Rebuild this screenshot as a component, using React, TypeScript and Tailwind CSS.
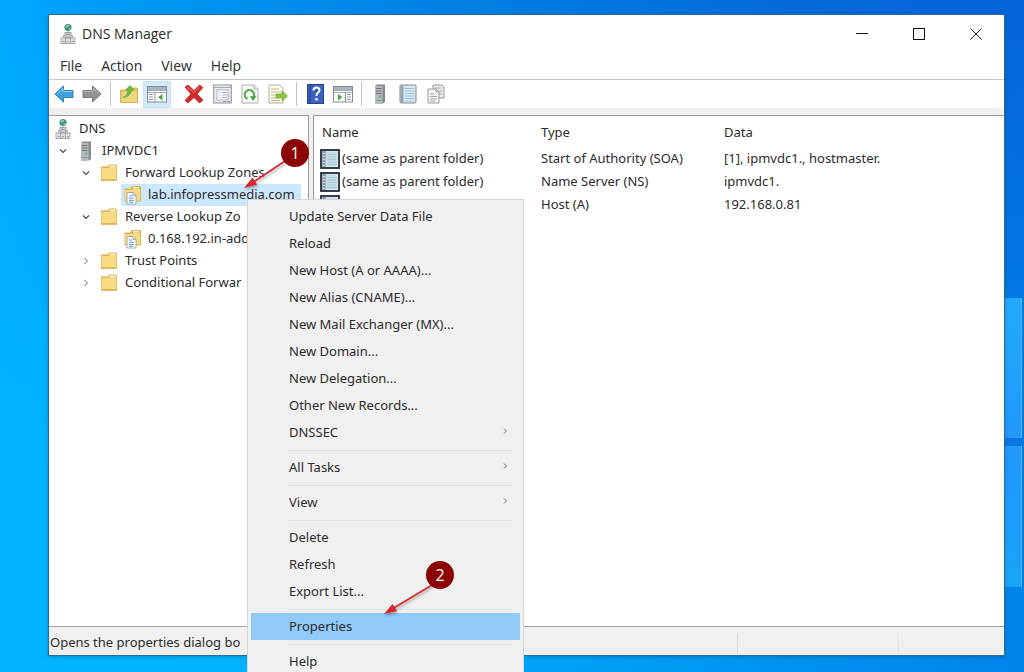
import type { ReactNode } from 'react';

function DnsIcon() {
  return (
    <svg width="16" height="22" viewBox="0 0 16 22" aria-hidden="true">
      <circle cx="8" cy="4.5" r="3.6" fill="#3c8f86" />
      <path d="M5 3.5q2-2.4 4.4-1.6L8.400 4 6 4.800zM8.600 5.400l2.400-.6-.6 2-1.600.6z" fill="#8fd08a" />
      <path d="M8 8.300v3M3.500 14.500v-2h9v2" stroke="#9a9fa2" fill="none" />
      <rect x="5" y="9.500" width="6" height="5" fill="#c5c9cb" stroke="#969b9f" strokeWidth=".8" />
      <rect x="1" y="15" width="14" height="5.500" fill="#dddfe1" stroke="#969b9f" strokeWidth=".8" />
      <path d="M5.500 15v5.500M10.500 15v5.500M2.500 18.500h2M7 18.500h2M12 18.500h2M6.500 11.500h3" stroke="#8b9094" strokeWidth=".8" />
    </svg>
  );
}

function ServerIcon() {
  return (
    <svg width="12" height="20" viewBox="0 0 12 20" aria-hidden="true">
      <path d="M1 2l2-1.500h8V18l-2 1.500H1z" fill="#868b8f" />
      <rect x="1" y="2" width="7.500" height="17.500" fill="#b5babd" />
      <path d="M2 4.500h5.500M2 7h5.500M2 9.500h5.500" stroke="#6c7275" />
      <rect x="5.200" y="11.500" width="2" height="2" fill="#5fae6b" />
      <path d="M2 16.500h5.500" stroke="#8d9396" />
    </svg>
  );
}

function FolderIcon() {
  return (
    <svg width="18" height="18" viewBox="0 0 18 18" aria-hidden="true">
      <path d="M1 2.500h6.500l1.500-2h7l1 1.500v14.500H1z" fill="#dfb551" />
      <path d="M9.500 1.500h6v2h-6z" fill="#fff6d8" />
      <path d="M1.500 4h8l1-1h6v12.500h-15z" fill="#f8da83" />
      <path d="M1 16h16" stroke="#cfa23f" />
      <path d="M16.500 3.500V16" stroke="#e2bd59" />
    </svg>
  );
}

function ZoneIcon() {
  return (
    <svg width="19" height="20" viewBox="0 0 19 20" aria-hidden="true">
      <path d="M1.500 3.500h6l1-2.500h8.500l1 1.500v14H1.500z" fill="#dcb450" />
      <path d="M2 5h7.500l1-1h6.500v11.500H2z" fill="#f7da86" />
      <path d="M10 2h6v1.500h-6z" fill="#fff6d8" />
      <path d="M4 7.500h6l3 3v8.500H4z" fill="#fff" stroke="#8d98a3" strokeWidth=".8" />
      <path d="M10 7.500v3h3" fill="#dbe7f1" stroke="#8d98a3" strokeWidth=".8" />
      <path d="M6 11h3M6 13.200h5M6 15.400h5M6 17.200h4" stroke="#4f8fcb" strokeWidth=".9" />
    </svg>
  );
}

function RecordIcon() {
  return (
    <svg width="20" height="20" viewBox="0 0 20 20" aria-hidden="true">
      <rect x="1" y="1" width="18" height="18" fill="#e9edf0" stroke="#252a38" strokeWidth="1.800" />
      <rect x="6" y="2.500" width="11.500" height="15" fill="#c6dfec" />
      <path d="M7.500 5.500h9M7.500 8h9M7.500 10.500h9M7.500 13h9M7.500 15.500h9" stroke="#9dbfd2" strokeWidth=".8" />
      <rect x="2.300" y="2" width="3.400" height="16" fill="#8b98a5" />
      <path d="M3 4.500h2M3 7.500h2M3 10.500h2M3 13.500h2M3 16.500h2" stroke="#dfe6ea" strokeWidth=".9" />
    </svg>
  );
}

function Arrow({ left }: { left?: boolean }) {
  return (
    <svg width="20" height="18" viewBox="0 0 20 18" aria-hidden="true">
      {left ? (
        <path d="M1 9l8.500-8v4.500H19v7H9.500V17z" fill="#3fa2e3" stroke="#2b7fbd" strokeLinejoin="round" />
      ) : (
        <path d="M19 9l-8.500-8v4.500H1v7h9.500V17z" fill="#929292" stroke="#7b7b7b" strokeLinejoin="round" />
      )}
      {left ? <path d="M3.500 8.500L9 3.500v3h9" stroke="#8fd0f7" fill="none" /> : <path d="M2 6.500h9.500v-3l5 5" stroke="#b9b9b9" fill="none" />}
    </svg>
  );
}

function UpFolderIcon() {
  return (
    <svg width="20" height="20" viewBox="0 0 20 20" aria-hidden="true">
      <path d="M1.500 6h6l2-2h9v14.500h-17z" fill="#e9c765" stroke="#c8a244" strokeWidth=".8" />
      <path d="M2.500 8h15.500v10H2.500z" fill="#f0d67f" />
      <path d="M4 13.500q4.500-1.500 5-7.500H6.500L11 1.500 15 6h-2.500q-1 7-8.500 7.500z" fill="#6bbf43" stroke="#4c9a30" strokeWidth=".6" />
    </svg>
  );
}

function PaneIcon({ flip }: { flip?: boolean }) {
  return (
    <svg width="20" height="18" viewBox="0 0 20 18" aria-hidden="true">
      <rect x=".5" y="1.500" width="19" height="15.500" fill="#fbfcfd" stroke="#838b93" />
      <rect x="1" y="2" width="18" height="3" fill="#a9b4be" />
      <path d="M1 5.500h18M1 7.500h18" stroke="#8e979f" strokeWidth=".8" />
      <path d={flip ? 'M12.500 7.500V17' : 'M8 7.500V17'} stroke="#8e979f" />
      <path d={flip ? 'M14 9.500h4M14 12h4M14 14.500h4' : 'M2 9.500h4M2 12h4M2 14.500h4'} stroke="#8a98a8" />
      <path d={flip ? 'M5 9l4.500 3.200L5 15.400z' : 'M15.500 9L11 12.200l4.500 3.200z'} fill="#4fa83c" />
    </svg>
  );
}

function DeleteIcon() {
  return (
    <svg width="20" height="20" viewBox="0 0 20 20" aria-hidden="true">
      <path d="M1 3l3-2 6 5.500L15.500 1 19 3.500 13 10l6 6-3.500 3L10 13.500 4 19l-3-2.500L7 10z" fill="#d22b2b" stroke="#a81d1d" strokeWidth=".7" />
      <path d="M3 3l7 5.500L15.500 3" stroke="#ee7d78" fill="none" />
    </svg>
  );
}

function PropertiesIcon() {
  return (
    <svg width="19" height="20" viewBox="0 0 19 20" aria-hidden="true">
      <rect x=".7" y="1" width="17.600" height="18" fill="#e8eaeb" stroke="#8b9297" />
      <path d="M1 3.500h17" stroke="#a3abb0" />
      <rect x="4" y="6" width="11" height="10" fill="#fff" stroke="#9aa2a8" strokeWidth=".8" />
      <path d="M6 8.500h1.500M9 8.500h5M6 11h1.500M9 11h5M6 13.500h1.500M9 13.500h5" stroke="#9fb3c5" />
      <path d="M10 17.500h3M14 17.500h3" stroke="#9ba3a8" />
    </svg>
  );
}

function RefreshIcon() {
  return (
    <svg width="18" height="20" viewBox="0 0 18 20" aria-hidden="true">
      <path d="M1 1h12l4 4v14H1z" fill="#fbfbf9" stroke="#a9afa8" />
      <path d="M13 1v4h4" fill="#dfe3df" stroke="#a9afa8" strokeWidth=".8" />
      <path d="M6.500 15A4.700 4.700 0 1 1 12.500 13" fill="none" stroke="#55b04f" strokeWidth="2.200" />
      <path d="M9 12.300h6.500L12 17z" fill="#47a545" />
    </svg>
  );
}

function ExportIcon() {
  return (
    <svg width="20" height="20" viewBox="0 0 20 20" aria-hidden="true">
      <path d="M1 1h11l3 3v15H1z" fill="#fdfcf3" stroke="#b1af9d" />
      <path d="M3 5h8M3 8h10M3 11h7M3 14h7M3 16.500h9" stroke="#c0b97c" />
      <path d="M8 10h6V7l5.500 5-5.500 5v-3H8z" fill="#8cc63f" stroke="#6da636" strokeWidth=".7" />
    </svg>
  );
}

function HelpIcon() {
  return (
    <svg width="17" height="20" viewBox="0 0 17 20" aria-hidden="true">
      <rect x=".5" y=".5" width="16" height="19" fill="#3d62bd" stroke="#24438f" />
      <path d="M3 1v18" stroke="#2747a0" strokeWidth="1.500" />
      <path d="M6.500 6.500q0-3 3-3t3 2.700q0 1.600-1.600 2.600T9.500 12" stroke="#fff" strokeWidth="1.900" fill="none" />
      <circle cx="9.500" cy="15.300" r="1.300" fill="#fff" />
    </svg>
  );
}

function LogIcon() {
  return (
    <svg width="18" height="20" viewBox="0 0 18 20" aria-hidden="true">
      <rect x="1" y="1" width="16" height="18" rx="1" fill="#d9e9f3" stroke="#828b92" />
      <rect x="1.500" y="1.500" width="3" height="17" fill="#9aa3aa" />
      <path d="M6 4.500h9.500M6 7h9.500M6 9.500h9.500M6 12h9.500M6 14.500h9.500M6 17h9.500" stroke="#a3c4d8" />
    </svg>
  );
}

function CopyIcon() {
  return (
    <svg width="18" height="20" viewBox="0 0 18 20" aria-hidden="true">
      <path d="M6 1h9l2 2v11H6z" fill="#e9e9e9" stroke="#999" />
      <path d="M1 5h8l3 3v11H1z" fill="#f4f4f4" stroke="#999" />
      <path d="M9 5v3h3M8 4h6M12 7h3M12 10h3" stroke="#a5a5a5" fill="none" />
      <path d="M3 10h4M3 12.500h7M3 15h7M3 17h5" stroke="#ababab" />
    </svg>
  );
}

function Chevron({ open }: { open?: boolean }) {
  return (
    <svg width="8" height="8" viewBox="0 0 8 8" aria-hidden="true">
      <path d={open ? 'M1 2.500l3 3 3-3' : 'M2.500 1l3 3-3 3'} fill="none" stroke={open ? '#4a4a4a' : '#a8a8a8'} strokeWidth="1.200" />
    </svg>
  );
}

type Node = { label: string; icon: ReactNode; indent: string; state?: 'open' | 'closed'; selected?: boolean };

const tree: Node[] = [
  { label: 'DNS', icon: <DnsIcon />, indent: 'pl-[3px]' },
  { label: 'IPMVDC1', icon: <ServerIcon />, indent: 'pl-[6px]', state: 'open' },
  { label: 'Forward Lookup Zones', icon: <FolderIcon />, indent: 'pl-[29px]', state: 'open' },
  { label: 'lab.infopressmedia.com', icon: <ZoneIcon />, indent: 'pl-[72px]', selected: true },
  { label: 'Reverse Lookup Zo', icon: <FolderIcon />, indent: 'pl-[29px]', state: 'open' },
  { label: '0.168.192.in-add', icon: <ZoneIcon />, indent: 'pl-[72px]' },
  { label: 'Trust Points', icon: <FolderIcon />, indent: 'pl-[29px]', state: 'closed' },
  { label: 'Conditional Forwar', icon: <FolderIcon />, indent: 'pl-[29px]', state: 'closed' },
];

const toolbar: { label: string; icon: ReactNode; active?: boolean }[][] = [
  [
    { label: 'Back', icon: <Arrow left /> },
    { label: 'Forward', icon: <Arrow /> },
  ],
  [
    { label: 'Up one level', icon: <UpFolderIcon /> },
    { label: 'Show or hide console tree', icon: <PaneIcon />, active: true },
  ],
  [
    { label: 'Delete', icon: <DeleteIcon /> },
    { label: 'Properties', icon: <PropertiesIcon /> },
    { label: 'Refresh', icon: <RefreshIcon /> },
    { label: 'Export list', icon: <ExportIcon /> },
  ],
  [
    { label: 'Help', icon: <HelpIcon /> },
    { label: 'Show or hide action pane', icon: <PaneIcon flip /> },
  ],
  [
    { label: 'New server', icon: <ServerIcon /> },
    { label: 'New record', icon: <LogIcon /> },
    { label: 'New zone', icon: <CopyIcon /> },
  ],
];

const records = [
  { name: '(same as parent folder)', type: 'Start of Authority (SOA)', data: '[1], ipmvdc1., hostmaster.' },
  { name: '(same as parent folder)', type: 'Name Server (NS)', data: 'ipmvdc1.' },
  { name: '', type: 'Host (A)', data: '192.168.0.81' },
];

const menuGroups: { label: string; sub?: boolean; active?: boolean }[][] = [
  [
    { label: 'Update Server Data File' },
    { label: 'Reload' },
    { label: 'New Host (A or AAAA)...' },
    { label: 'New Alias (CNAME)...' },
    { label: 'New Mail Exchanger (MX)...' },
    { label: 'New Domain...' },
    { label: 'New Delegation...' },
    { label: 'Other New Records...' },
    { label: 'DNSSEC', sub: true },
  ],
  [{ label: 'All Tasks', sub: true }],
  [{ label: 'View', sub: true }],
  [{ label: 'Delete' }, { label: 'Refresh' }, { label: 'Export List...' }],
  [{ label: 'Properties', active: true }],
  [{ label: 'Help' }],
];

function ContextMenu() {
  return (
    <div role="menu" className="absolute left-[247px] top-[199px] w-[277px] border border-[#d6d6d6] bg-[#f0f0f0] px-[3px] pt-[3px] pb-1">
      {menuGroups.map((group, g) => (
        <div key={group[0].label}>
          {g > 0 && (
            <div className="flex h-2 items-center pr-2 pl-9">
              <div className="h-px flex-1 bg-[#e2e2e2]" />
            </div>
          )}
          {group.map((item) => (
            <button
              key={item.label}
              role="menuitem"
              className={`flex h-[27px] w-full items-center justify-between pr-3 pl-[38px] text-left ${item.active ? 'bg-[#91c9f7]' : ''}`}
            >
              {item.label}
              {item.sub && (
                <svg width="5" height="8" viewBox="0 0 5 8" className="mb-1" aria-hidden="true">
                  <path d="M1 1.500L3.500 4 1 6.500" fill="none" stroke="#777" />
                </svg>
              )}
            </button>
          ))}
        </div>
      ))}
    </div>
  );
}

function Annotations() {
  return (
    <>
      <svg className="pointer-events-none absolute left-[236px] top-[150px] drop-shadow-[1px_2px_1px_rgba(0,0,0,0.3)]" width="60" height="44" viewBox="0 0 60 44" aria-hidden="true">
        <path d="M52 9L16 33" stroke="#d8262c" strokeWidth="1.600" />
        <path d="M8 38l8.500-10.500 4.500 7z" fill="#d8262c" />
      </svg>
      <span className="absolute left-[281px] top-[139px] flex size-7 items-center justify-center rounded-full bg-[#8b0304] font-['Open_Sans',sans-serif] text-base font-medium text-white">1</span>
      <svg className="pointer-events-none absolute left-[378px] top-[576px] drop-shadow-[1px_2px_1px_rgba(0,0,0,0.3)]" width="60" height="44" viewBox="0 0 60 44" aria-hidden="true">
        <path d="M54 9L14 33" stroke="#d8262c" strokeWidth="1.600" />
        <path d="M6 38l8.500-10 4.500 7z" fill="#d8262c" />
      </svg>
      <span className="absolute left-[426px] top-[561px] flex size-7 items-center justify-center rounded-full bg-[#8b0304] font-['Open_Sans',sans-serif] text-base font-medium text-white">2</span>
    </>
  );
}

export default function App() {
  return (
    <div className="relative flex h-screen flex-col overflow-hidden bg-[linear-gradient(90deg,#00aaff_0%,#009cf5_10%,#0080e2_45%,#0568d8_80%,#0664da_100%)] pt-3.5 pr-[19px] pb-4 pl-12 font-['Noto_Sans','Open_Sans',sans-serif] text-[13px] text-[#2b2b2b]">
      <div className="absolute inset-x-0 bottom-0 h-full bg-[linear-gradient(90deg,#00b4ff_0%,#00b2ff_30%,#009ef5_60%,#0084ea_100%)] [mask-image:linear-gradient(to_bottom,transparent,black_70%)]" />
      <div className="absolute top-[298px] right-0 flex w-5 flex-col gap-2 bg-[#0878e0] pr-0.5">
        <div className="h-[140px] border-r border-[#4fc0ff] bg-linear-to-b from-[#20aaff] to-[#2299fb]" />
        <div className="h-[141px] border-r border-[#4fc0ff] bg-linear-to-b from-[#2299fb] to-[#18a4fb]" />
      </div>

      <main className="relative flex min-h-0 flex-1 flex-col border border-[#2a6c9c] bg-white shadow-[0_1px_4px_rgba(0,0,0,0.2)]">
        <header className="flex h-[38px] items-center pl-[11px] font-['Open_Sans','Noto_Sans',sans-serif] text-sm">
          <DnsIcon />
          <h1 className="ml-1.5 flex-1">DNS Manager</h1>
          <button aria-label="Minimize" className="flex h-full w-[57px] items-center justify-center">
            <svg width="12" height="12" viewBox="0 0 12 12"><path d="M0 5.500h12" stroke="#111" /></svg>
          </button>
          <button aria-label="Maximize" className="flex h-full w-[57px] items-center justify-center">
            <svg width="12" height="12" viewBox="0 0 12 12"><rect x=".5" y=".5" width="11" height="11" fill="none" stroke="#111" /></svg>
          </button>
          <button aria-label="Close" className="flex h-full w-[57px] items-center justify-center">
            <svg width="12" height="12" viewBox="0 0 12 12"><path d="M.5 .5l11 11M11.500 .5l-11 11" stroke="#222" /></svg>
          </button>
        </header>

        <nav className="flex h-[27px] items-center gap-[19px] border-b border-[#c8c8c8] pl-[11px] font-['Open_Sans','Noto_Sans',sans-serif] text-sm">
          {['File', 'Action', 'View', 'Help'].map((m) => (
            <button key={m}>{m}</button>
          ))}
        </nav>

        <div role="toolbar" aria-label="Console tools" className="flex h-7 items-center pl-px">
          {toolbar.map((group, g) => (
            <div key={group[0].label} className="flex h-full items-center">
              {g > 0 && (
                <div className="flex h-full w-[9px] justify-center py-0.5">
                  {g !== 2 && <div className="w-px bg-[#c4c4c4]" />}
                </div>
              )}
              {group.map((t) => (
                <button
                  key={t.label}
                  aria-label={t.label}
                  className={`flex h-[27px] w-7 items-center justify-center ${t.active ? 'border border-[#c6e2f6] bg-[#d3e8f8]' : ''}`}
                >
                  {t.icon}
                </button>
              ))}
            </div>
          ))}
        </div>

        <div className="flex min-h-0 flex-1 gap-1 bg-[#f0f0f0] pt-[7px]">
          <div role="tree" aria-label="Console tree" className="w-[260px] shrink-0 overflow-hidden border-t border-r border-[#9a9a9a] bg-white pt-0.5">
            {tree.map((n) => (
              <div key={n.label} role="treeitem" aria-selected={!!n.selected} className={`flex h-[22px] items-center ${n.indent}`}>
                {n.state && (
                  <button aria-label={n.state === 'open' ? 'Collapse' : 'Expand'} className="mr-1 flex w-4 justify-center">
                    <Chevron open={n.state === 'open'} />
                  </button>
                )}
                <span className={`flex h-full items-center pr-1.5 whitespace-nowrap ${n.selected ? 'bg-[#cce8ff]' : ''}`}>
                  <span className="mr-[5px] flex w-[22px] justify-center">{n.icon}</span>
                  {n.label}
                </span>
              </div>
            ))}
          </div>

          <div className="min-w-0 flex-1 overflow-hidden border-t border-l border-[#9a9a9a] bg-white pt-0.5">
            <table className="w-full table-fixed border-collapse text-left">
              <colgroup>
                <col className="w-[227px]" />
                <col className="w-[183px]" />
                <col />
              </colgroup>
              <thead>
                <tr className="h-[29px]">
                  <th className="p-0 pl-2 font-normal">Name</th>
                  <th className="p-0 font-normal">Type</th>
                  <th className="p-0 font-normal">Data</th>
                </tr>
              </thead>
              <tbody>
                {records.map((r) => (
                  <tr key={r.type} className="h-[23px]">
                    <td className="p-0 pl-1.5">
                      <span className="flex items-center gap-0.5">
                        <RecordIcon />
                        {r.name}
                      </span>
                    </td>
                    <td className="p-0">{r.type}</td>
                    <td className="p-0">{r.data}</td>
                  </tr>
                ))}
              </tbody>
            </table>
          </div>
        </div>

        <footer className="flex h-[29px] items-center border-t border-[#a0a0a0] bg-[#f0f0f0] pt-1 pl-px">
          <span className="flex-1">Opens the properties dialog bo</span>
          <span className="h-5 w-[161px] border-l border-[#dadada]" />
          <span className="h-5 w-[106px] border-l border-[#e4e4e4]" />
        </footer>
      </main>

      <ContextMenu />
      <Annotations />
    </div>
  );
}
